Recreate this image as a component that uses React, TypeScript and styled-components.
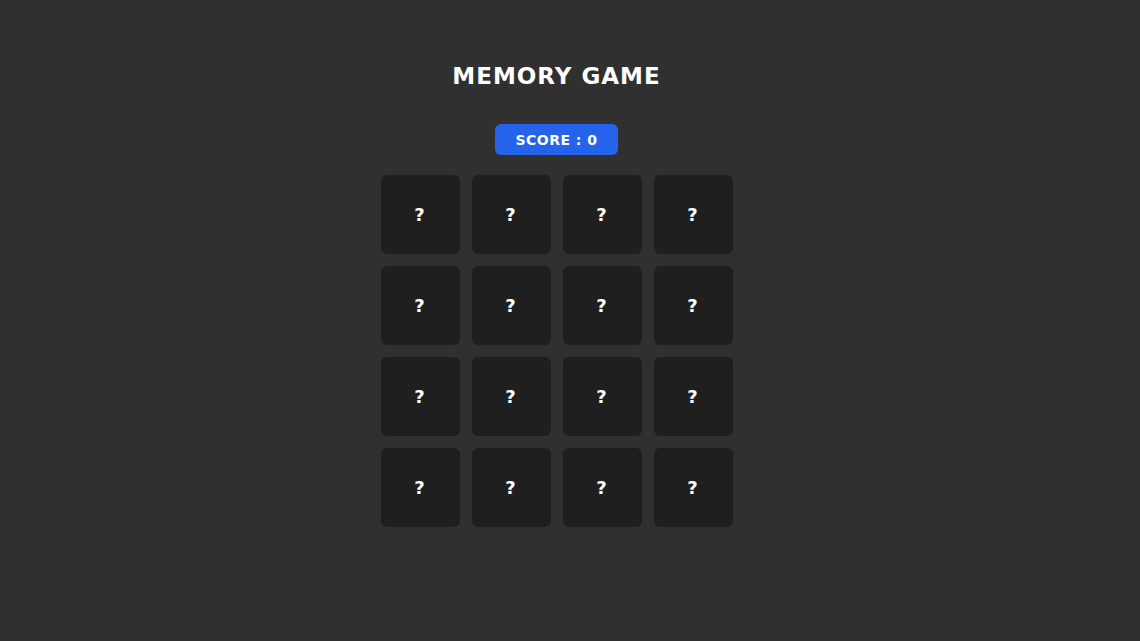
import React from 'react';
import styled, { createGlobalStyle } from 'styled-components';

const GlobalStyle = createGlobalStyle`
  html, body {
    margin: 0;
    padding: 0;
    background: #303030;
  }
  body {
    font-family: 'DejaVu Sans', 'Open Sans', sans-serif;
    color: #ffffff;
  }
`;

const Page = styled.main`
  min-height: 641px;
  display: flex;
  flex-direction: column;
  align-items: center;
  padding: 61px 27px 0 0;
  box-sizing: border-box;
`;

const Title = styled.h1`
  margin: 0;
  font-size: 23px;
  font-weight: 700;
  letter-spacing: 1px;
  line-height: 30px;
`;

const Score = styled.div`
  margin-top: 33px;
  width: 123px;
  height: 31px;
  border-radius: 6px;
  background: #2563eb;
  display: flex;
  align-items: center;
  justify-content: center;
  font-size: 14px;
  font-weight: 700;
  letter-spacing: 0.5px;
`;

const Board = styled.div`
  margin-top: 20px;
  display: grid;
  grid-template-columns: repeat(4, 79px);
  grid-auto-rows: 79px;
  gap: 12px;
`;

const Card = styled.button`
  border: none;
  padding: 0 1px 0 0;
  border-radius: 6px;
  background: #1f1f1f;
  color: #ffffff;
  font-family: inherit;
  font-size: 18px;
  font-weight: 700;
  display: flex;
  align-items: center;
  justify-content: center;
  cursor: pointer;
`;

const cards = Array.from({ length: 16 }, (_, i) => i);

const App = () => (
  <>
    <GlobalStyle />
    <Page>
      <Title>MEMORY GAME</Title>
      <Score>SCORE : 0</Score>
      <Board>
        {cards.map((i) => (
          <Card key={i}>?</Card>
        ))}
      </Board>
    </Page>
  </>
);

export default App;
